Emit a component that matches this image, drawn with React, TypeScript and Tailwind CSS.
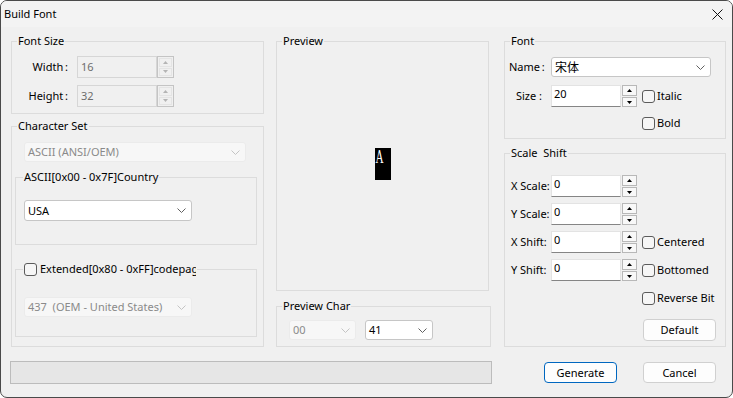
import React from "react";

const Chevron = ({ color = "#5f5f5f" }: { color?: string }) => (
  <svg width="9" height="5" viewBox="0 0 9 5" className="shrink-0">
    <path d="M0.5 0.5 L4.5 4.5 L8.5 0.5" stroke={color} strokeWidth="1" fill="none" />
  </svg>
);

const Tri = ({ up, color }: { up: boolean; color: string }) => (
  <svg width="5" height="3" viewBox="0 0 5 3" className="shrink-0">
    <path d={up ? "M0 3 L2.5 0 L5 3 Z" : "M0 0 L2.5 3 L5 0 Z"} fill={color} />
  </svg>
);

function Group({
  label,
  className,
  labelPos = "left-[5px]",
  children,
}: {
  label: React.ReactNode;
  className: string;
  labelPos?: string;
  children?: React.ReactNode;
}) {
  return (
    <div className={`relative border border-[#dcdcdc] ${className}`}>
      <div className={`absolute -top-[9px] ${labelPos} px-[1px] bg-[#f0f0f0] leading-[16px] whitespace-nowrap`}>
        {label}
      </div>
      {children}
    </div>
  );
}

const Check = () => (
  <div className="w-[13px] h-[13px] rounded-[3px] border border-[#5b5b5b] bg-[#f6f6f6] shrink-0" />
);

function Combo({
  text,
  disabled,
  cjk,
  className,
}: {
  text: string;
  disabled?: boolean;
  cjk?: boolean;
  className: string;
}) {
  return (
    <div
      className={`flex items-center justify-between rounded-[3px] border pl-[3px] pr-[5px] ${
        disabled ? "bg-[#f7f7f7] border-[#ebebeb] text-[#8a8a8a]" : "bg-white border-[#c6c6c6] text-black"
      } ${cjk ? "font-['Noto_Sans_CJK_SC',sans-serif] text-[12px]" : ""} ${className}`}
    >
      <span className="whitespace-pre">{text}</span>
      <Chevron color={disabled ? "#c4c4c4" : "#606060"} />
    </div>
  );
}

function Spinner() {
  return (
    <div className="w-[15px] h-[22px] flex flex-col gap-[1px] shrink-0">
      <div className="h-[11px] border border-[#b8b8b8] bg-[#f8f8f8] flex items-center justify-center">
        <Tri up color="#000" />
      </div>
      <div className="h-[10px] border border-[#b8b8b8] bg-[#f8f8f8] flex items-center justify-center">
        <Tri up={false} color="#000" />
      </div>
    </div>
  );
}

function DisabledSpinner() {
  return (
    <div className="w-[17px] h-[22px] border border-[#c4c4c4] p-[1px] flex flex-col gap-[1px] shrink-0">
      <div className="flex-1 border border-[#e4e4e4] flex items-center justify-center">
        <Tri up color="#b4b4b4" />
      </div>
      <div className="flex-1 border border-[#e4e4e4] flex items-center justify-center">
        <Tri up={false} color="#b4b4b4" />
      </div>
    </div>
  );
}

function Edit({ value }: { value: string }) {
  return (
    <div className="w-[70px] h-[22px] border border-[#e3e3e3] border-b-[#858585] bg-white pl-[2px] leading-[16px] shrink-0">
      {value}
    </div>
  );
}

function SizeRow({ label, value }: { label: string; value: string }) {
  return (
    <div className="flex items-center h-[22px]">
      <div className="w-[65px] text-right pr-[9px] whitespace-pre">{label}</div>
      <div className="w-[80px] h-[22px] border border-[#d6d6d6] bg-[#f0f0f0] text-[#6d6d6d] pl-[3px] leading-[20px]">
        {value}
      </div>
      <DisabledSpinner />
    </div>
  );
}

function ScaleRow({ label, value, check }: { label: string; value: string; check?: string }) {
  return (
    <div className="flex items-center h-[22px]">
      <div className="w-[40px] whitespace-nowrap">{label}</div>
      <Edit value={value} />
      <div className="ml-[1px]">
        <Spinner />
      </div>
      {check && (
        <div className="flex items-center ml-[5px]">
          <Check />
          <span className="ml-[2px]">{check}</span>
        </div>
      )}
    </div>
  );
}

export default function App() {
  return (
    <div className="w-[733px] h-[398px] overflow-hidden">
      <div className="w-[733px] h-[398px] flex flex-col bg-[#f0f0f0] border border-[#4a4a4a] rounded-[7px] overflow-hidden text-[11px] leading-[16px] text-black font-['Noto_Sans',sans-serif]">
        {/* Title bar */}
        <div className="h-[26px] shrink-0 bg-[#f3f3f3] flex items-center justify-between pl-[3px] pr-[9px]">
          <span>Build Font</span>
          <svg width="11" height="11" viewBox="0 0 11 11">
            <path d="M0.5 0.5 L10.5 10.5 M10.5 0.5 L0.5 10.5" stroke="#111" strokeWidth="1" />
          </svg>
        </div>

        {/* Main */}
        <div className="flex pt-[14px] pl-[10px]">
          {/* Left column */}
          <div className="w-[253px] flex flex-col gap-[12px]">
            <Group label="Font Size" className="h-[73px] flex flex-col pt-[14px] gap-[7px]">
              <SizeRow label={"Width\u2009:"} value="16" />
              <SizeRow label={"Height\u2009:"} value="32" />
            </Group>

            <Group label="Character Set" className="h-[221px] flex flex-col pt-[15px] pl-[3px]">
              <div className="ml-[9px]">
                <Combo disabled text="ASCII (ANSI/OEM)" className="w-[222px] h-[20px]" />
              </div>
              <Group
                label="ASCII[0x00 - 0x7F]Country"
                labelPos="left-[7px]"
                className="mt-[15px] w-[242px] h-[68px] pt-[22px] pl-[8px]"
              >
                <Combo text="USA" className="w-[168px] h-[21px]" />
              </Group>
              <Group
                label={
                  <div className="w-[172px] overflow-hidden flex items-center gap-[3px]">
                    <Check />
                    <span className="whitespace-nowrap">Extended[0x80 - 0xFF]codepage</span>
                  </div>
                }
                labelPos="left-[7px]"
                className="mt-[24px] w-[242px] h-[68px] pt-[27px] pl-[8px]"
              >
                <Combo disabled text="437  (OEM - United States)" className="w-[168px] h-[20px]" />
              </Group>
            </Group>
          </div>

          {/* Middle column */}
          <div className="ml-[12px] w-[215px] flex flex-col">
            <Group label="Preview" className="w-[213px] h-[250px] flex items-center justify-center pb-[5px]">
              <div className="w-[16px] h-[32px] bg-black overflow-hidden">
                <div className="text-white font-['Liberation_Serif',serif] text-[18px] leading-[18px] scale-x-[0.62] origin-left pl-[1px]">
                  A
                </div>
              </div>
            </Group>
            <Group label="Preview Char" className="mt-[15px] w-[215px] h-[41px] flex items-start pt-[13px] pl-[12px] gap-[9px]">
              <Combo disabled text="00" className="w-[67px] h-[20px]" />
              <Combo text="41" className="w-[68px] h-[20px]" />
            </Group>
          </div>

          {/* Right column */}
          <div className="ml-[13px] w-[222px] flex flex-col">
            <Group label="Font" className="h-[98px] pt-[15px] pl-[4px] flex flex-col">
              <div className="flex items-center h-[20px]">
                <div className="w-[42px] text-right pr-[9px] whitespace-pre">{"Name\u2009:"}</div>
                <Combo cjk text="宋体" className="w-[160px] h-[20px]" />
              </div>
              <div className="flex items-center mt-[8px]">
                <div className="w-[42px] text-right pr-[9px] whitespace-pre">Size :</div>
                <Edit value="20" />
                <div className="ml-[1px]">
                  <Spinner />
                </div>
                <div className="flex items-center ml-[5px]">
                  <Check />
                  <span className="ml-[2px]">Italic</span>
                </div>
              </div>
              <div className="flex items-center mt-[8px] ml-[133px]">
                <Check />
                <span className="ml-[2px]">Bold</span>
              </div>
            </Group>

            <Group label={"Scale\u00a0\u00a0Shift"} className="mt-[14px] h-[194px] pt-[21px] pl-[6px] flex flex-col gap-[6px]">
              <ScaleRow label="X Scale:" value="0" />
              <ScaleRow label="Y Scale:" value="0" />
              <ScaleRow label="X Shift:" value="0" check="Centered" />
              <ScaleRow label="Y Shift:" value="0" check="Bottomed" />
              <div className="flex items-center mt-[3px] ml-[131px]">
                <Check />
                <span className="ml-[2px]">Reverse Bit</span>
              </div>
              <div className="mt-[7px] ml-[132px] w-[73px] h-[22px] rounded-[4px] border border-[#d0d0d0] bg-[#fdfdfd] flex items-center justify-center">
                Default
              </div>
            </Group>
          </div>
        </div>

        {/* Bottom */}
        <div className="flex items-start mt-[14px] pl-[9px]">
          <div className="w-[482px] h-[23px] border border-[#bcbcbc] bg-[#e6e6e6]" />
          <div className="ml-[52px] mt-[1px] w-[73px] h-[21px] rounded-[4px] border border-[#0067c0] bg-[#fdfdfd] flex items-center justify-center">
            Generate
          </div>
          <div className="ml-[26px] mt-[1px] w-[73px] h-[21px] rounded-[4px] border border-[#d0d0d0] bg-[#fdfdfd] flex items-center justify-center">
            Cancel
          </div>
        </div>
      </div>
    </div>
  );
}
